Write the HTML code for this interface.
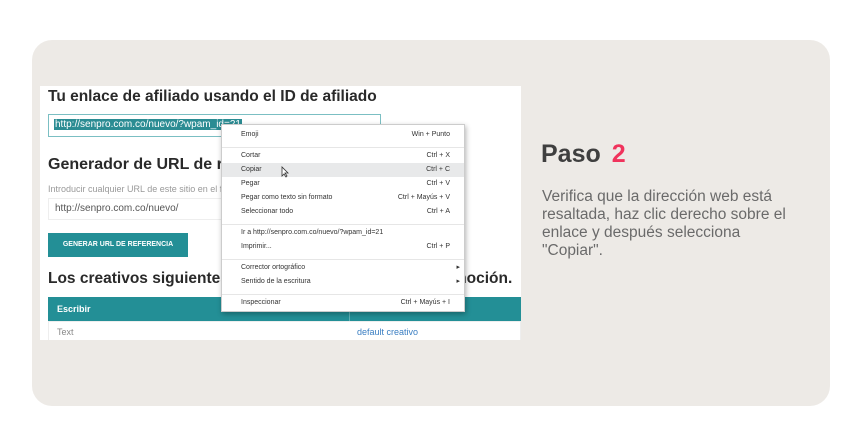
<!DOCTYPE html>
<html><head><style>
*{margin:0;padding:0;box-sizing:border-box}
body{width:860px;height:433px;background:#fff;position:relative;overflow:hidden;font-family:"Liberation Sans",sans-serif}
.card{position:absolute;left:32px;top:40px;width:798px;height:366px;background:#edeae6;border-radius:20px}
.shot{position:absolute;left:40px;top:86px;width:481px;height:254px;background:#fff;overflow:hidden}
.a{position:absolute;white-space:nowrap}
h1{font-size:15px;font-weight:bold;color:#2a2a2a}
.menu{position:absolute;left:221px;top:124px;width:244px;height:188px;background:#fff;border:1px solid #ccc;box-shadow:1px 2px 5px rgba(0,0,0,.3);font-size:7px;color:#333}
.mi{position:absolute;left:0;width:100%;height:14px;line-height:14px;padding-left:19px}
.mi span{position:absolute;right:14px}
.sep{position:absolute;left:0;width:100%;border-top:1px solid #e6e6e6}
</style></head><body>
<div class="card"></div>
<div class="shot">
 <h1 class="a" style="left:8px;top:2px;font-size:15.5px">Tu enlace de afiliado usando el ID de afiliado</h1>
 <div class="a" style="left:8px;top:28px;width:333px;height:23px;border:1px solid #7bbfc3"></div>
 <div class="a" style="left:14px;top:33px;font-size:10px;background:#2b8c93;color:#fff;padding:0 1px">http://senpro.com.co/nuevo/?wpam_id=21</div>
 <h1 class="a" style="left:8px;top:70px;font-size:16px">Generador de URL de referencia</h1>
 <div class="a" style="left:8px;top:98px;font-size:9px;color:#999">Introducir cualquier URL de este sitio en el formulario para generar un enlace de referencia</div>
 <div class="a" style="left:8px;top:112px;width:200px;height:22px;border:1px solid #eee;font-size:10px;color:#555;padding:4px 6px">http://senpro.com.co/nuevo/</div>
 <div class="a" style="left:8px;top:147px;width:140px;height:24px;background:#238f96;color:#fff;font-size:7px;font-weight:bold;line-height:24px;text-align:center">GENERAR URL DE REFERENCIA</div>
 <h1 class="a" style="left:8px;top:184px;font-size:15.5px">Los creativos siguientes están disponibles para su promoción.</h1>
 <div class="a" style="left:8px;top:211px;width:473px;height:24px;background:#238f96"></div>
 <div class="a" style="left:17px;top:218px;font-size:9px;color:#fff;font-weight:bold">Escribir</div>
 <div class="a" style="left:309px;top:211px;height:24px;border-left:1px solid #5fb0b5"></div>
 <div class="a" style="left:8px;top:235px;width:473px;height:20px;border:1px solid #eee"></div>
 <div class="a" style="left:17px;top:241px;font-size:9px;color:#888">Text</div>
 <div class="a" style="left:317px;top:241px;font-size:9px;color:#3a7ec2">default creativo</div>
</div>
<div class="menu">
 <div class="mi" style="top:3px">Emoji<span>Win + Punto</span></div>
 <div class="sep" style="top:22px"></div>
 <div class="mi" style="top:24px">Cortar<span>Ctrl + X</span></div>
 <div class="mi" style="top:38px;background:#e8e9ea">Copiar<span>Ctrl + C</span></div>
 <div class="mi" style="top:52px">Pegar<span>Ctrl + V</span></div>
 <div class="mi" style="top:66px">Pegar como texto sin formato<span>Ctrl + Mayús + V</span></div>
 <div class="mi" style="top:80px">Seleccionar todo<span>Ctrl + A</span></div>
 <div class="sep" style="top:99px"></div>
 <div class="mi" style="top:101px">Ir a http://senpro.com.co/nuevo/?wpam_id=21</div>
 <div class="mi" style="top:115px">Imprimir...<span>Ctrl + P</span></div>
 <div class="sep" style="top:134px"></div>
 <div class="mi" style="top:136px">Corrector ortográfico<span style="right:4px">▸</span></div>
 <div class="mi" style="top:150px">Sentido de la escritura<span style="right:4px">▸</span></div>
 <div class="sep" style="top:169px"></div>
 <div class="mi" style="top:171px">Inspeccionar<span>Ctrl + Mayús + I</span></div>
 <svg style="position:absolute;left:59px;top:41px" width="8" height="12" viewBox="0 0 8 12"><path d="M1 1 L1 10 L3 8 L5 11 L6 10 L4 7 L7 7 Z" fill="#fff" stroke="#333" stroke-width="0.8"/></svg>
</div>
<div class="a" style="left:541px;top:140px;font-size:25px;font-weight:bold;color:#3f3f3f">Paso <span style="color:#f0335c;margin-left:4px">2</span></div>
<div class="a" style="left:542px;top:188px;font-size:15.5px;line-height:18px;color:#6a6a6a">Verifica que la dirección web está<br>resaltada, haz clic derecho sobre el<br>enlace y después selecciona<br>"Copiar".</div>
</body></html>
